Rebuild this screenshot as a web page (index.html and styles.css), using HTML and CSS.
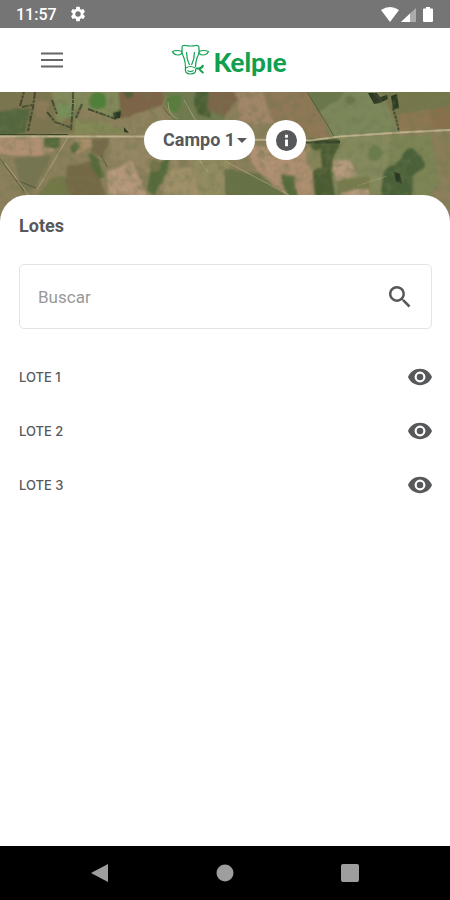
FILE: index.html
```html
<!DOCTYPE html>
<html lang="es">
<head>
<meta charset="utf-8">
<meta name="viewport" content="width=device-width, initial-scale=1">
<title>Kelpie</title>
<link rel="stylesheet" href="styles.css">
</head>
<body>
<div class="app">
  <div class="status">
    <span class="status-time">11:57</span>
    <svg class="status-gear" viewBox="0 0 24 24" aria-hidden="true"><path d="M19.14 12.94c.04-.3.06-.61.06-.94s-.02-.64-.07-.94l2.03-1.58a.49.49 0 0 0 .12-.61l-1.92-3.32a.49.49 0 0 0-.59-.22l-2.39.96a7 7 0 0 0-1.62-.94l-.36-2.54a.48.48 0 0 0-.48-.41h-3.84a.47.47 0 0 0-.47.41l-.36 2.54c-.59.24-1.13.57-1.62.94l-2.39-.96a.48.48 0 0 0-.59.22L2.74 8.87a.47.47 0 0 0 .12.61l2.03 1.58a6 6 0 0 0 0 1.88l-2.03 1.58a.49.49 0 0 0-.12.61l1.92 3.32c.12.22.37.29.59.22l2.39-.96c.5.38 1.03.7 1.62.94l.36 2.54c.05.24.24.41.48.41h3.84c.24 0 .44-.17.47-.41l.36-2.54a7 7 0 0 0 1.62-.94l2.39.96c.22.08.47 0 .59-.22l1.92-3.32a.47.47 0 0 0-.12-.61zM12 15.6a3.6 3.6 0 1 1 0-7.2 3.6 3.6 0 0 1 0 7.2z"/></svg>
    <svg class="status-signals" viewBox="0 0 54 18" aria-hidden="true">
      <path d="M1 5Q10-1 19 5L10 17z"/>
      <path class="dim" d="M36 3v14H21z"/><path d="M30 8.600v8.400H21z"/>
      <path d="M44 3.500h2V2h4v1.500h2q1 0 1 1V16q0 1-1 1h-8q-1 0-1-1V4.500q0-1 1-1z"/>
    </svg>
  </div>

  <header class="topbar">
    <button class="menu" type="button" aria-label="Menú">
      <svg viewBox="0 0 22 16" aria-hidden="true"><path d="M0 1.500h22M0 8h22M0 14.500h22"/></svg>
    </button>
    <a class="brand" href="#">
      <svg viewBox="0 0 38 32" aria-hidden="true">
        <path d="M11 7V4q0-3 3-2.500 5.500 1 11 0Q28 1 28 4v3M11 7.500Q6 5.500 1.500 7.500 3 11 7 11t4-3.500zM28 7.500q5-2 9.500 0Q36 11 32 11t-4-3.500zM11 8q.5 3 2 6 1.500 4 1.500 10M28 8q-.5 3-2 6-1.500 4-1.500 9M15.500 8q0 7 3 13M23.500 8q0 7-3 13M15 24q4.500-3 9 0M14.500 24q-1 6 5 6t5-5M16.500 26.500q3 2 6 0"/>
        <path class="thick" d="M32 21q-.5 3-4 3.500h-3.500M28 24.500q2 3 4.500 4.500"/>
      </svg>
      <span>Kelpıe</span>
    </a>
  </header>

  <section class="map" aria-label="Mapa">
    <svg class="terrain" viewBox="0 0 450 130" preserveAspectRatio="xMidYMin slice" aria-hidden="true">
      <defs>
        <filter id="grain" x="0" y="0" width="100%" height="100%">
          <feTurbulence type="fractalNoise" baseFrequency=".12" numOctaves="3" seed="8"/>
          <feColorMatrix values="0 0 0 0 .16  0 0 0 0 .18  0 0 0 0 .08  1.800 0 0 0 -.75"/>
        </filter>
        <filter id="rough" x="-10%" y="-10%" width="120%" height="120%">
          <feTurbulence type="fractalNoise" baseFrequency=".08" numOctaves="2" seed="3" result="n"/>
          <feDisplacementMap in="SourceGraphic" in2="n" scale="4" xChannelSelector="R" yChannelSelector="G"/>
          <feGaussianBlur stdDeviation=".8"/>
        </filter>
        <filter id="soft" filterUnits="userSpaceOnUse" x="-5" y="-5" width="460" height="140"><feGaussianBlur stdDeviation=".5"/></filter>
      </defs>
      <rect width="450" height="130" fill="#8b805b"/>
      <g filter="url(#rough)">
        <path fill="#7c7550" d="M-5-5h90l-10 45-80 8z"/>
        <path fill="#52663c" d="M-5 20l36-4-6 25-30 4z"/>
        <path fill="#82895a" d="M52-5h75l-8 33-40-12-22 18z"/>
        <path fill="#8d7a59" d="M35 8l15 3-4 18-12-6z"/>
        <path fill="#78915a" d="M60 10l12 4 2 12-16-2z"/>
        <path fill="#858a55" d="M76 28l30 2 22 11-54 1z"/>
        <path fill="#7d6446" d="M118-5h47l-2 19-42 15z"/>
        <path fill="#8f835d" d="M120 27l43-14 8 10-15 22h-28z"/>
        <path fill="#6f7c50" d="M164-5h61v38h-52z"/>
        <path fill="#7d6548" d="M207-5h22l8 11-13 19-16-7z"/>
        <path fill="#a18667" d="M236 0l25-2 14 32-33 2z"/>
        <path fill="#8e7854" d="M262-5h44l27 50h-55z"/>
        <path fill="#7c885a" d="M308-5h70l20 45-65 6z"/>
        <path fill="#68784c" d="M307-5h40l-10 14-20 11z"/>
        <path fill="#76774b" d="M378-5h77v42h-55z"/>
        <path fill="#8c7751" d="M398 22l33-5 6 21h-38z"/>
        <path fill="#8a6f4c" d="M430 20l25-8v24h-22z"/>
        <path fill="#b09072" d="M-5 45l48-1 12 13-15 7-43-1z"/>
        <path fill="#ab8e6b" d="M75 47h18l-1 8-16 6z"/>
        <path fill="#746b49" d="M92 46h17l-5 19-14-3z"/>
        <path fill="#958763" d="M111 45l68 4-5 60-37-37-27-6z"/>
        <path fill="#777451" d="M14 66l38-3-18 34-12 5z"/>
        <path fill="#746945" d="M68 73l26-4 12 36H60z"/>
        <path fill="#737847" d="M48 88l14-5 10 22H36z"/>
        <path fill="#b5977a" d="M107 80l25-12 14 36h-37z"/>
        <path fill="#a09067" d="M171 78l20-3 10 30h-40z"/>
        <path fill="#938c61" d="M185 55h45l-4 50h-24z"/>
        <path fill="#ae8f70" d="M248 53l61 4 14 49h-38l-34-36z"/>
        <path fill="#667145" d="M225 77l35 5 32 25h-67z"/>
        <path fill="#858a5d" d="M337 46l56-3-4 63-67-1z"/>
        <path fill="#777b4d" d="M337 89l32-5 2 20h-34z"/>
        <path fill="#7d8555" d="M390 43h40l10 47-10 15h-45z"/>
        <path fill="#897e56" d="M430 42h25v62l-16-28z"/>
        <path fill="#b59a7d" d="M332 69l18-1 7 15-22 6zM341 100l28-3v10h-30z"/>
      </g>
      <g filter="url(#rough)">
        <path fill="#4b5c32" d="M308 47h32l-9 30 4 28h-20l-2-18 3-17z"/>
        <path fill="#858458" d="M306 59l14-2 2 20-12 1z"/>
        <circle cx="98" cy="9" r="9" fill="#4e8039"/>
        <circle cx="174" cy="11" r="8" fill="#547e3c"/>
        <path fill="#4c5e34" d="M113 21l9-3v7l-8 2zM123-2l7-2 3 8-7 2zM195-2h14l-2 16 4 12-14-4-3-12z"/>
        <path fill="#556a38" d="M44 46l16-2-1 12-15-2zM69 55l8-6 3 6-8 7zM88 61l10 6 6 18-5 2-7-12zM280 82l14 1 4 22h-10zM150 80q10-12 20-14l-3 14-12 24-8-6z"/>
        <path fill="#4a6037" d="M384 78l16-10q6-14 13-10 12 7 12 17l-12 9-1 22h-32z"/>
        <circle cx="375" cy="61" r="7" fill="#697d4b"/>
        <circle cx="350" cy="8" r="5" fill="#697749"/>
        <circle cx="155" cy="74" r="6" fill="#757449"/>
      </g>
      <g filter="url(#soft)">
        <path fill="#2b3722" d="M368 1l9 0 3 4 7-2 1 4-8 4-6 1zM391 4l6-2 2 14-6 2zM394 80l6 2 2 10-6-3zM113 21l8-2-1 7-5 1zM124 35l5 6-5-1z"/>
        <g fill="none" stroke="#343d25" stroke-linejoin="round" opacity=".8">
          <path d="M47 20l8 10 17 6M22 15l10-2M35 0l-2 15-5 24M73 0v12l-2 26M88 17l28 10M52 8l5 14M20 14l4-14M82 12l-6 14" stroke-width="2" stroke-dasharray="7 1 3 1"/>
          <path d="M393 16l3 10 3 14" stroke-width="2" stroke-dasharray="3 1"/>
          <path d="M306-2l28 46M163 15l7 9M0 67l24 32M16 88l20 8M101 63l6 12" stroke-width="1" opacity=".7"/>
        </g>
      </g>
      <path d="M0 42.500h68" fill="none" stroke="#36442a" filter="url(#soft)"/>
      <path d="M240 50h12M306 50h34" stroke="#36442a" stroke-width="3" filter="url(#soft)"/>
      <g fill="none" stroke="#beb18c" filter="url(#soft)">
        <path d="M0 44.500h145l95 3 70 1 30-4 60-4 50-2.500" stroke-width="2"/>
        <path d="M68 45L37 98M5 71l25 34M168 10q0 13 10 17M184 8l12 21M225 69l64 34M198 66l10 14" stroke-width="1" opacity=".65"/>
        <path d="M252 54l20 27M260 54l18 23M112 78l18 26M357 94l30-10" stroke-width="1" opacity=".35"/>
      </g>
      <rect width="450" height="130" filter="url(#grain)" opacity=".6"/>
    </svg>
    <div class="controls">
      <div class="field-pick">
        <select aria-label="Campo"><option>Campo 1</option></select>
        <svg viewBox="0 0 10 5" aria-hidden="true"><path d="M0 0h10L5 5z"/></svg>
      </div>
      <button class="info" type="button" aria-label="Información">
        <svg viewBox="0 0 24 24" aria-hidden="true"><path fill-rule="evenodd" d="M12 1a11 11 0 1 0 0 22 11 11 0 0 0 0-22zm-1.500 5h3v3h-3zm0 5h3v7h-3z"/></svg>
      </button>
    </div>
  </section>

  <main class="sheet">
    <h1>Lotes</h1>
    <div class="search">
      <input type="text" placeholder="Buscar" aria-label="Buscar">
      <button type="button" aria-label="Iniciar búsqueda">
        <svg viewBox="3 3 18 18" aria-hidden="true"><path d="M15.500 14h-.79l-.28-.27A6.500 6.500 0 1 0 13.730 14.430l.27.28v.79l5 4.990L20.490 19zm-6 0a4.500 4.500 0 1 1 0-9 4.500 4.500 0 0 1 0 9z"/></svg>
      </button>
    </div>
    <ul class="lots">
      <li><span>LOTE 1</span><button type="button" aria-label="Ver lote 1"><svg viewBox="1 4 22 16" aria-hidden="true"><use href="#eye"/></svg></button></li>
      <li><span>LOTE 2</span><button type="button" aria-label="Ver lote 2"><svg viewBox="1 4 22 16" aria-hidden="true"><use href="#eye"/></svg></button></li>
      <li><span>LOTE 3</span><button type="button" aria-label="Ver lote 3"><svg viewBox="1 4 22 16" aria-hidden="true"><use href="#eye"/></svg></button></li>
    </ul>
    <svg class="symbols" aria-hidden="true"><defs><path id="eye" d="M12 4.500C7 4.500 2.730 7.610 1 12c1.730 4.390 6 7.500 11 7.500s9.270-3.110 11-7.500c-1.730-4.390-6-7.500-11-7.500zM12 17a5 5 0 1 1 0-10 5 5 0 0 1 0 10zm0-8a3 3 0 1 0 0 6 3 3 0 0 0 0-6z"/></defs></svg>
  </main>

  <nav class="navbar" aria-label="Sistema">
    <button type="button" aria-label="Atrás"><svg viewBox="0 0 20 20" aria-hidden="true"><path d="M18 1v18L1 10z"/></svg></button>
    <button type="button" aria-label="Inicio"><svg viewBox="0 0 20 20" aria-hidden="true"><circle cx="10" cy="10" r="8.500"/></svg></button>
    <button type="button" aria-label="Recientes"><svg viewBox="0 0 20 20" aria-hidden="true"><rect x="1" y="1" width="18" height="18" rx="2"/></svg></button>
  </nav>
</div>
</body>
</html>
```
FILE: styles.css
```css
* {
  box-sizing: border-box;
}

body {
  margin: 0;
  background: #fff;
  color: #57585a;
  font-family: Roboto, "Liberation Sans", sans-serif;
}

button {
  display: flex;
  align-items: center;
  justify-content: center;
  padding: 0;
  border: 0;
  background: none;
  color: inherit;
}

svg {
  display: block;
  fill: currentColor;
}

.app {
  display: flex;
  flex-direction: column;
  min-height: 100vh;
}

.status {
  display: flex;
  align-items: center;
  height: 28px;
  padding: 0 16px;
  background: #757575;
  color: #fff;
}

.status-time {
  padding-top: 2px;
  font-size: 16px;
  font-weight: 500;
  line-height: 26px;
}

.status-gear {
  width: 18px;
  height: 18px;
  margin-left: 12px;
}

.status-signals {
  width: 54px;
  height: 18px;
  margin-left: auto;
}

.dim {
  opacity: .4;
}

.topbar {
  display: grid;
  grid-template-columns: 1fr auto 1fr;
  align-items: center;
  height: 64px;
  padding: 0 36px;
}

.menu {
  width: 32px;
  height: 32px;
}

.menu svg {
  width: 22px;
  height: 16px;
  stroke: #666;
  stroke-width: 2;
}

.brand {
  display: flex;
  align-items: center;
  gap: 4px;
  margin-left: 8px;
  color: #10a050;
  font-family: Lato, sans-serif;
  font-size: 26px;
  font-weight: 900;
  line-height: 32px;
  text-decoration: none;
}

.brand span {
  padding-top: 4px;
}

.brand svg {
  width: 38px;
  height: 32px;
  fill: none;
  stroke: currentColor;
  stroke-width: 1.2;
}

.brand .thick {
  stroke-width: 2;
}

.map {
  position: relative;
  height: 130px;
}

.terrain {
  position: absolute;
  inset: 0;
  width: 100%;
  height: 100%;
}

.controls {
  position: relative;
  display: flex;
  justify-content: center;
  gap: 11px;
  padding-top: 28px;
}

.field-pick {
  position: relative;
  display: flex;
  align-items: center;
}

.field-pick select {
  height: 40px;
  width: 111px;
  padding: 0 0 0 19px;
  border: 0;
  border-radius: 20px;
  appearance: none;
  background: #fff;
  color: inherit;
  font: 700 18px/24px Roboto, sans-serif;
}

.field-pick svg {
  position: absolute;
  right: 8px;
  width: 10px;
  height: 5px;
  pointer-events: none;
}

.info {
  width: 40px;
  height: 40px;
  border-radius: 50%;
  background: #fff;
}

.info svg {
  width: 23px;
  height: 23px;
}

.sheet {
  position: relative;
  flex: 1;
  margin-top: -27px;
  padding: 19px 18px 19px 19px;
  border-radius: 27px 27px 0 0;
  background: #fff;
}

h1 {
  margin: 0 0 26px;
  font-size: 18px;
  font-weight: 700;
  line-height: 24px;
}

.search {
  display: flex;
  align-items: center;
  height: 65px;
  padding: 0 20px 0 18px;
  border: 1px solid #e4e4e4;
  border-radius: 5px;
}

.search input {
  flex: 1;
  min-width: 0;
  padding: 0;
  border: 0;
  outline: 0;
  background: none;
  color: inherit;
  font: 400 17px/24px Roboto, sans-serif;
}

.search input::placeholder {
  color: #999;
  opacity: 1;
}

.search button svg {
  width: 22px;
  height: 22px;
}

.lots {
  margin: 21px 0 0;
  padding: 0;
  list-style: none;
}

.lots li {
  display: flex;
  align-items: center;
  justify-content: space-between;
  height: 54px;
  font-family: Inter, sans-serif;
  font-size: 13px;
  font-weight: 500;
  line-height: 16px;
}

.lots button svg {
  width: 24px;
  height: 18px;
}

.symbols {
  position: absolute;
  width: 0;
  height: 0;
}

.navbar {
  display: flex;
  align-items: center;
  justify-content: space-between;
  height: 54px;
  padding: 0 90px;
  background: #000;
  color: #9e9e9e;
}

.navbar svg {
  width: 20px;
  height: 20px;
}
```
